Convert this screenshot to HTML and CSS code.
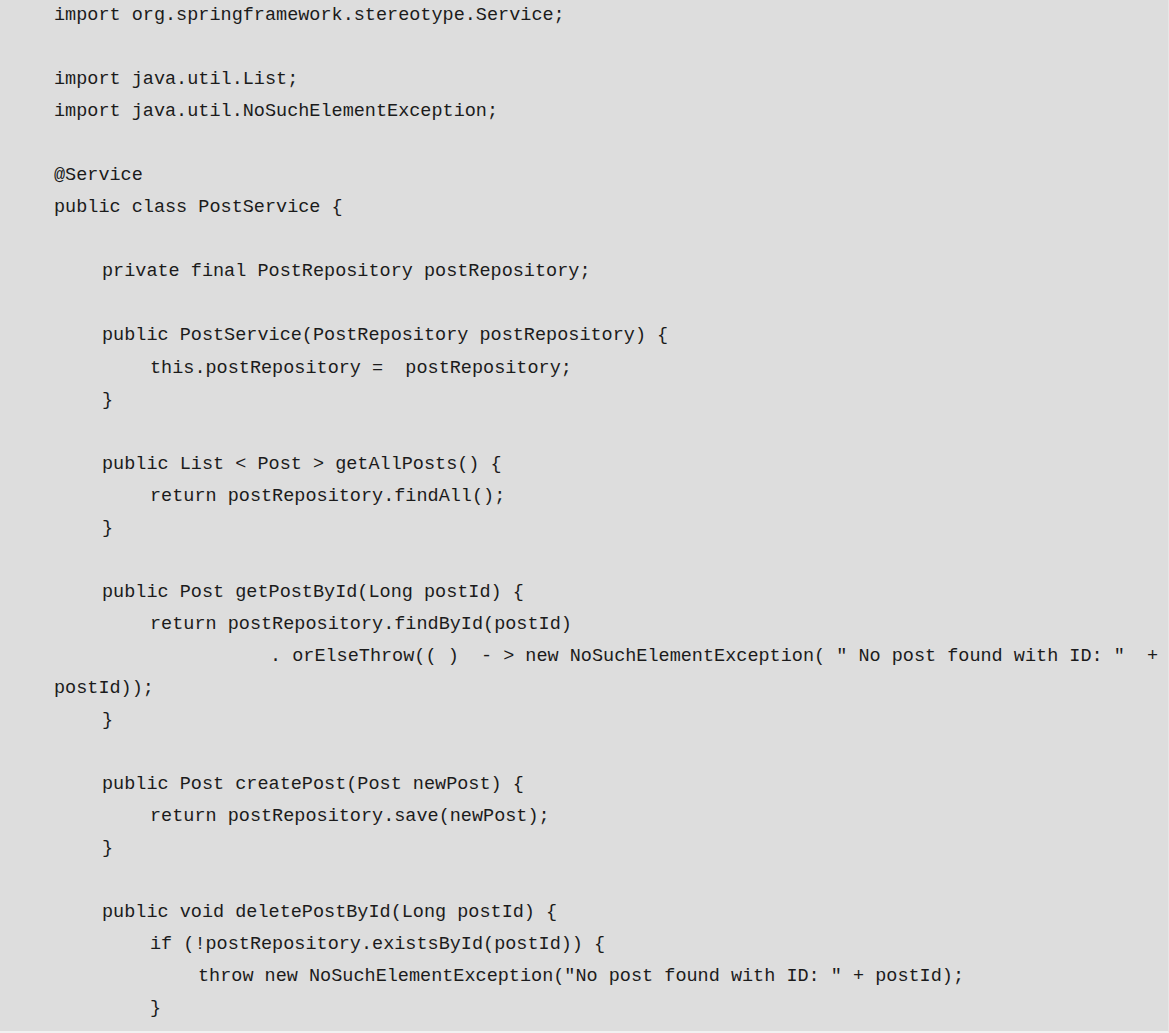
FILE: index.html
```html
<!DOCTYPE html>
<html lang="en">
<head>
<meta charset="utf-8">
<title>PostService.java</title>
<link rel="stylesheet" href="styles.css">
</head>
<body>
<div class="page">
  <pre class="code"><div class="line">import org.springframework.stereotype.Service;</div><div class="line blank"></div><div class="line">import java.util.List;</div><div class="line">import java.util.NoSuchElementException;</div><div class="line blank"></div><div class="line">@Service</div><div class="line">public class PostService {</div><div class="line blank"></div><div class="line i1">private final PostRepository postRepository;</div><div class="line blank"></div><div class="line i1">public PostService(PostRepository postRepository) {</div><div class="line i2">this.postRepository =  postRepository;</div><div class="line i1">}</div><div class="line blank"></div><div class="line i1">public List &lt; Post &gt; getAllPosts() {</div><div class="line i2">return postRepository.findAll();</div><div class="line i1">}</div><div class="line blank"></div><div class="line i1">public Post getPostById(Long postId) {</div><div class="line i2">return postRepository.findById(postId)</div><div class="line cont">. orElseThrow(( )  - &gt; new NoSuchElementException( " No post found with ID: "  +</div><div class="line">postId));</div><div class="line i1">}</div><div class="line blank"></div><div class="line i1">public Post createPost(Post newPost) {</div><div class="line i2">return postRepository.save(newPost);</div><div class="line i1">}</div><div class="line blank"></div><div class="line i1">public void deletePostById(Long postId) {</div><div class="line i2">if (!postRepository.existsById(postId)) {</div><div class="line i3">throw new NoSuchElementException("No post found with ID: " + postId);</div><div class="line i2">}</div></pre>
</div>
</body>
</html>
```
FILE: styles.css
```css
html, body {
  margin: 0;
  padding: 0;
  background: #dddddd;
}

body {
  height: 1033px;
  overflow: hidden;
}

.page {
  height: 1033px;
  border-right: 1px solid #e6e6e6;
  border-bottom: 2px solid #f1f1f1;
  box-sizing: border-box;
}

.code {
  margin: 0;
  padding: 0 0 0 54px;
  font-family: "Liberation Mono", "Courier New", monospace;
  font-size: 18.5px;
  line-height: 32.06px;
  color: #1b1b1b;
  white-space: pre;
}

.line {
  height: 32.06px;
}

.i1 { padding-left: 48px; }
.i2 { padding-left: 96px; }
.i3 { padding-left: 144px; }
.cont { padding-left: 216px; }
```
